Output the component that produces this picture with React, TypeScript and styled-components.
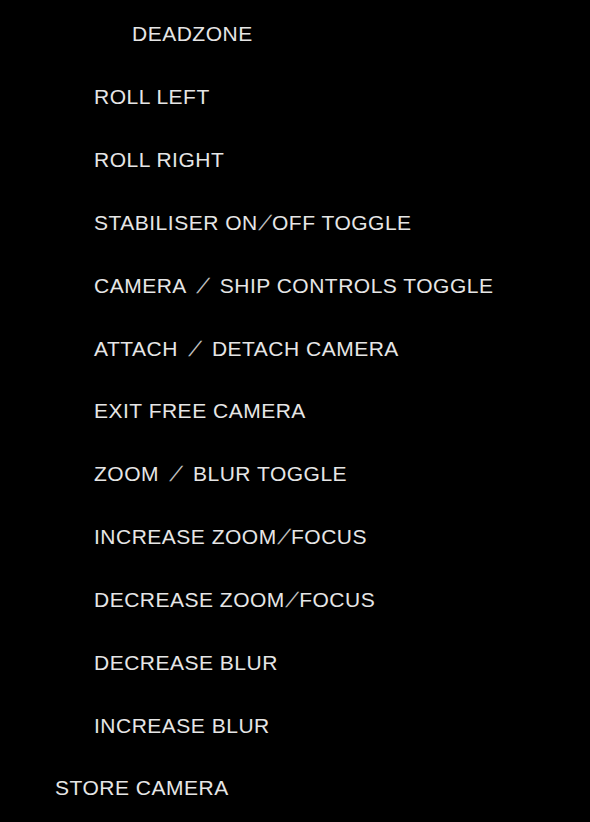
import React from "react";
import styled, { createGlobalStyle } from "styled-components";

const Global = createGlobalStyle`
  html, body { margin: 0; padding: 0; background: #000; }
  body { width: 590px; height: 822px; overflow: hidden; }
`;

const List = styled.ul`
  list-style: none;
  margin: 0;
  padding: 3px 0 0 0;
  display: flex;
  flex-direction: column;
  background: #000;
  min-height: 822px;
  box-sizing: border-box;
`;

const indents = [55, 94, 132];

const Row = styled.li<{ $level: number }>`
  height: 62.83px;
  display: flex;
  align-items: center;
  padding-left: ${(p) => indents[p.$level]}px;
  font-family: "Liberation Sans", Arial, sans-serif;
  font-size: 21px;
  letter-spacing: 0.5px;
  color: #e6e6e6;
  white-space: pre;
  text-transform: uppercase;
`;

const Slash = styled.span<{ $spaced: boolean }>`
  display: inline-block;
  margin: 0 ${(p) => (p.$spaced ? 7.5 : 4)}px;
  transform: skewX(-28deg);
  font-weight: 300;
  opacity: 0.85;
`;

const items: [string, number][] = [
  ["DEADZONE", 2],
  ["ROLL LEFT", 1],
  ["ROLL RIGHT", 1],
  ["STABILISER ON/OFF TOGGLE", 1],
  ["CAMERA / SHIP CONTROLS TOGGLE", 1],
  ["ATTACH / DETACH CAMERA", 1],
  ["EXIT FREE CAMERA", 1],
  ["ZOOM / BLUR TOGGLE", 1],
  ["INCREASE ZOOM/FOCUS", 1],
  ["DECREASE ZOOM/FOCUS", 1],
  ["DECREASE BLUR", 1],
  ["INCREASE BLUR", 1],
  ["STORE CAMERA", 0],
];

function Label({ text }: { text: string }) {
  const parts = text.split("/");
  return (
    <span>
      {parts.map((part, i) => (
        <React.Fragment key={i}>
          {i > 0 && <Slash $spaced={parts[i - 1].endsWith(" ")}>/</Slash>}
          {part}
        </React.Fragment>
      ))}
    </span>
  );
}

export default function App() {
  return (
    <>
      <Global />
      <List>
        {items.map(([label, level]) => (
          <Row key={label} $level={level}>
            <Label text={label} />
          </Row>
        ))}
      </List>
    </>
  );
}
